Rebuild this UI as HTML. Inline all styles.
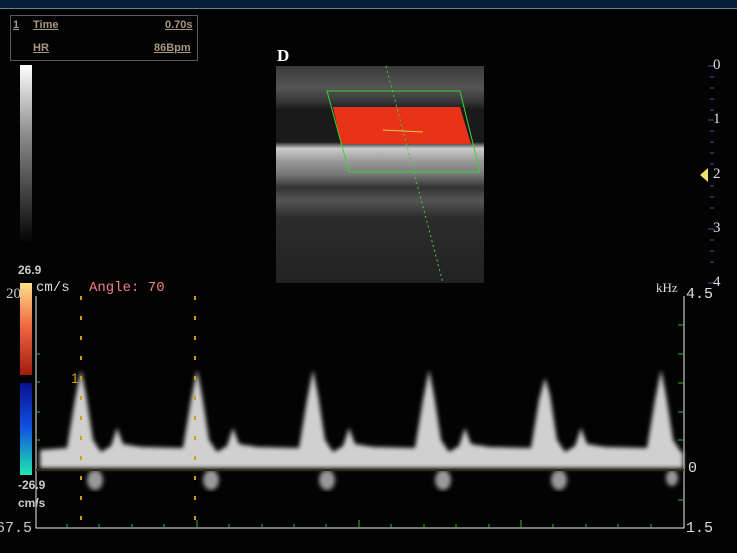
<!DOCTYPE html>
<html><head><style>
body{margin:0;width:737px;height:553px;background:#030303;overflow:hidden;position:relative;font-family:"Liberation Serif",serif}
.t{position:absolute;white-space:nowrap}
</style></head><body>
<div style="position:absolute;left:0;top:0;width:737px;height:8px;background:#061d3a;border-bottom:1px solid #6f7f92"></div>
<div style="position:absolute;left:10px;top:15px;width:186px;height:44px;border:1px solid #5a5a5a"></div>
<div class="t" style="left:13px;top:19px;font:bold 11px 'Liberation Sans',sans-serif;color:#a89680;text-decoration:underline">1</div>
<div class="t" style="left:33px;top:19px;font:bold 11px 'Liberation Sans',sans-serif;color:#a89680;text-decoration:underline">Time</div>
<div class="t" style="left:165px;top:19px;font:bold 11px 'Liberation Sans',sans-serif;color:#a89680;text-decoration:underline">0.70s</div>
<div class="t" style="left:33px;top:42px;font:bold 11px 'Liberation Sans',sans-serif;color:#a89680;text-decoration:underline">HR</div>
<div class="t" style="left:154px;top:42px;font:bold 11px 'Liberation Sans',sans-serif;color:#a89680;text-decoration:underline">86Bpm</div>
<div style="position:absolute;left:20px;top:65px;width:12px;height:180px;background:linear-gradient(#fff,#888 40%,#000)"></div>
<div class="t" style="left:277px;top:46px;font:bold 17px 'Liberation Serif',serif;color:#fff">D</div>
<svg style="position:absolute;left:0;top:0" width="737" height="553">
<defs>
<linearGradient id="bm" x1="0" y1="0" x2="0" y2="1"><stop offset="0" stop-color="#3a3a3a"/><stop offset=".1" stop-color="#555"/><stop offset=".16" stop-color="#3a3a3a"/><stop offset=".2" stop-color="#1a1a1a"/><stop offset=".35" stop-color="#1a1a1a"/><stop offset=".38" stop-color="#ccc"/><stop offset=".44" stop-color="#999"/><stop offset=".5" stop-color="#777"/><stop offset=".56" stop-color="#333"/><stop offset=".62" stop-color="#555"/><stop offset=".7" stop-color="#2c2c2c"/><stop offset="1" stop-color="#222"/></linearGradient>
<linearGradient id="cb" x1="0" y1="0" x2="0" y2="1"><stop offset="0" stop-color="#ffe08a"/><stop offset=".22" stop-color="#f06a40"/><stop offset=".48" stop-color="#a01a10"/><stop offset=".48" stop-color="#000"/><stop offset=".52" stop-color="#000"/><stop offset=".52" stop-color="#0a1090"/><stop offset=".75" stop-color="#1050e0"/><stop offset="1" stop-color="#20e8b0"/></linearGradient>
<filter id="bl"><feGaussianBlur stdDeviation="2"/></filter>
</defs>
<rect x="276" y="66" width="208" height="217" fill="url(#bm)"/>
<path d="M333,107 L460,107 L471,144 L341,144 Z" fill="#e8321a"/>
<path d="M327,91 L460,91 L480,172 L349,172 Z" fill="none" stroke="#3ad33a" stroke-width="1"/>
<line x1="386" y1="66" x2="443" y2="283" stroke="#3ad33a" stroke-dasharray="2,3"/>
<line x1="383" y1="130" x2="423" y2="132" stroke="#e0d040"/>
<rect x="20" y="283" width="12" height="192" fill="url(#cb)"/>
<g stroke="#e8e8e8" fill="none"><path d="M36,296 V528 H684 V296"/></g>
<g stroke="#3fb03f"><line x1="36" y1="354" x2="40" y2="354"/><line x1="36" y1="412" x2="40" y2="412"/><line x1="36" y1="382" x2="40" y2="382"/><line x1="36" y1="440" x2="40" y2="440"/>
<line x1="678" y1="325" x2="684" y2="325"/><line x1="678" y1="354" x2="684" y2="354"/><line x1="678" y1="383" x2="684" y2="383"/><line x1="678" y1="412" x2="684" y2="412"/><line x1="678" y1="440" x2="684" y2="440"/><line x1="678" y1="500" x2="684" y2="500"/>
<line x1="67" y1="524" x2="67" y2="528"/><line x1="99" y1="524" x2="99" y2="528"/><line x1="132" y1="524" x2="132" y2="528"/><line x1="164" y1="524" x2="164" y2="528"/><line x1="197" y1="520" x2="197" y2="528"/><line x1="229" y1="524" x2="229" y2="528"/><line x1="262" y1="524" x2="262" y2="528"/><line x1="294" y1="524" x2="294" y2="528"/><line x1="326" y1="524" x2="326" y2="528"/><line x1="359" y1="520" x2="359" y2="528"/><line x1="391" y1="524" x2="391" y2="528"/><line x1="424" y1="524" x2="424" y2="528"/><line x1="456" y1="524" x2="456" y2="528"/><line x1="489" y1="524" x2="489" y2="528"/><line x1="521" y1="520" x2="521" y2="528"/><line x1="553" y1="524" x2="553" y2="528"/><line x1="586" y1="524" x2="586" y2="528"/><line x1="618" y1="524" x2="618" y2="528"/><line x1="651" y1="524" x2="651" y2="528"/></g>
<path filter="url(#bl)" fill="#d0d0d0" d="M40,468 L40,450 L67,448 75,400 81,370 86,395 93,440 101,452 111,446 117,428 123,444 141,447 181,448 L183,448 191,400 197,370 202,395 209,440 217,452 227,446 233,428 239,444 257,447 297,448 L299,448 307,400 313,370 318,395 325,440 333,452 343,446 349,428 355,444 373,447 413,448 L415,448 423,400 429,370 434,395 441,440 449,452 459,446 465,428 471,444 489,447 529,448 L531,448 539,400 545,378 550,395 557,440 565,452 575,446 581,428 587,444 605,447 645,448 L647,448 655,400 661,370 666,395 673,440 681,452 683,452 L683,468 Z"/>
<g fill="#999" filter="url(#bl)"><ellipse cx="95" cy="480" rx="8" ry="10"/><ellipse cx="211" cy="480" rx="8" ry="10"/><ellipse cx="327" cy="480" rx="8" ry="10"/><ellipse cx="443" cy="480" rx="8" ry="10"/><ellipse cx="559" cy="480" rx="8" ry="10"/><ellipse cx="672" cy="478" rx="6" ry="8"/></g>
<line x1="36" y1="470" x2="684" y2="470" stroke="#3a2a1a" stroke-width="2"/>
<g stroke="#c8a020" stroke-width="2" stroke-dasharray="4,16"><line x1="81" y1="296" x2="81" y2="528"/><line x1="195" y1="296" x2="195" y2="528"/></g>
<g stroke="#4050a0"><path d="M708,66h6M710,77h4M710,88h4M710,99h4M710,110h4M708,120h6M710,131h4M710,142h4M710,153h4M710,164h4M710,186h4M710,197h4M710,208h4M708,229h6M710,240h4M710,251h4M710,262h4M708,283h6"/></g>
<path d="M700,175 L708,168 L708,182 Z" fill="#f0e070"/>
</svg>
<div class="t" style="left:713px;top:57px;font-size:15px;color:#ddd">0</div>
<div class="t" style="left:713px;top:111px;font-size:15px;color:#ddd">1</div>
<div class="t" style="left:713px;top:166px;font-size:15px;color:#ddd">2</div>
<div class="t" style="left:713px;top:220px;font-size:15px;color:#ddd">3</div>
<div class="t" style="left:713px;top:274px;font-size:15px;color:#ddd">4</div>
<div class="t" style="left:18px;top:263px;font:bold 12px 'Liberation Sans',sans-serif;color:#ccc">26.9</div>
<div class="t" style="left:6px;top:286px;font-size:15px;color:#ccc">20</div>
<div class="t" style="left:36px;top:280px;font:14px 'Liberation Mono',monospace;color:#ddd">cm/s</div>
<div class="t" style="left:89px;top:280px;font:14px 'Liberation Mono',monospace;color:#f08080">Angle: 70</div>
<div class="t" style="left:71px;top:370px;font:14px 'Liberation Sans',sans-serif;color:#c8a020">1</div>
<div class="t" style="left:18px;top:478px;font:bold 12px 'Liberation Sans',sans-serif;color:#ccc">-26.9</div>
<div class="t" style="left:18px;top:496px;font:bold 12px 'Liberation Sans',sans-serif;color:#ccc">cm/s</div>
<div class="t" style="left:-4px;top:520px;font:15px 'Liberation Mono',monospace;color:#ccc">67.5</div>
<div class="t" style="left:656px;top:280px;font-size:13px;color:#ddd">kHz</div>
<div class="t" style="left:686px;top:286px;font:15px 'Liberation Mono',monospace;color:#ddd">4.5</div>
<div class="t" style="left:688px;top:460px;font:15px 'Liberation Mono',monospace;color:#ddd">0</div>
<div class="t" style="left:686px;top:520px;font:15px 'Liberation Mono',monospace;color:#ddd">1.5</div>
</body></html>
